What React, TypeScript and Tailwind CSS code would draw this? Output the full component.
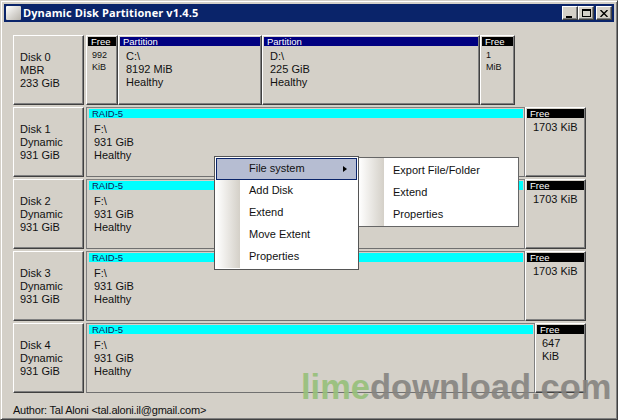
import React from "react";

const raised = "bg-[#d4d0c8] border border-t-white border-l-white border-r-[#404040] border-b-[#404040] shadow-[inset_-1px_-1px_0_#808080]";
const sunkenFlat = "bg-[#d4d0c8] border border-t-[#808080] border-l-[#808080] border-r-[#808080] border-b-[#707070]";

function DiskButton({ lines }: { lines: string[] }) {
  return (
    <div className={`${raised} w-[71px] h-[70px] shrink-0 mr-[2px] flex flex-col justify-center pl-[6px] text-[11px] leading-[13px] text-[#111]`}>
      {lines.map((l) => <div key={l}>{l}</div>)}
    </div>
  );
}

function Cell({ width, color, head, lines, small, pad = 6, top = 4 }: { width?: number; color: string; head: string; lines: string[]; small?: boolean; pad?: number; top?: number }) {
  return (
    <div className={`${raised} h-[70px] shrink-0 p-[1px] flex flex-col`} style={{ width }}>
      <div className={`h-[9px] ${color} text-white text-[9.5px] leading-[9px] pl-[3px] whitespace-nowrap`}>{head}</div>
      <div className={`text-[#111] ${small ? "text-[9px] leading-[12px]" : "text-[11px] leading-[13px]"}`} style={{ paddingLeft: pad, paddingTop: top }}>
        {lines.map((l) => <div key={l}>{l}</div>)}
      </div>
    </div>
  );
}

function RaidRow({ disk, raidW, freeW, free }: { disk: string; raidW: number; freeW: number; free: string[] }) {
  return (
    <div className="flex h-[70px] mb-[2px]">
      <DiskButton lines={[disk, "Dynamic", "931 GiB"]} />
      <div className="flex items-start">
        <div className={`${sunkenFlat} h-[70px] p-[1px] pl-[2px] shrink-0`} style={{ width: raidW }}>
          <div className="h-[9px] bg-[#00ffff] text-[#10205a] text-[9.5px] leading-[9px] pl-[3px] whitespace-nowrap">RAID-5</div>
          <div className="pl-[5px] pt-[5px] text-[11px] leading-[13px] text-[#111]">
            <div>F:\</div>
            <div>931 GiB</div>
            <div>Healthy</div>
          </div>
        </div>
        <Cell width={freeW} color="bg-black" head="Free" lines={free} pad={free.length > 1 ? 5 : 6} top={3} />
      </div>
    </div>
  );
}

function MenuItem({ label, active, arrow }: { label: string; active?: boolean; arrow?: boolean }) {
  return (
    <div className={`relative h-[22px] pb-[2px] flex items-center text-[11px] text-[#111] ${active ? "bg-[#b6bdd2] outline outline-1 -outline-offset-1 outline-[#0a246a]" : "bg-transparent"}`}>
      <span className="pl-[33px]">{label}</span>
      {arrow && <span className="absolute right-[10px] top-[8px] w-0 h-0 border-y-[3.5px] border-y-transparent border-l-[4px] border-l-black" />}
    </div>
  );
}

export default function App() {
  return (
    <div className="relative w-[618px] h-[420px] overflow-hidden bg-[#d4d0c8] border border-t-[#d4d0c8] border-l-[#d4d0c8] border-r-[#404040] border-b-[#404040] shadow-[inset_1px_1px_0_#fff,inset_-1px_-1px_0_#808080] p-[3px] flex flex-col" style={{ fontFamily: '"Liberation Sans", sans-serif' }}>
      <div className="h-[18px] shrink-0 bg-[#0a246a] flex items-center pl-[2px] pr-[2px]">
        <div className="w-[15px] h-[14px] bg-gradient-to-br from-white to-[#b8b4ac] rounded-[1px] mr-[2px]" />
        <span className="text-white text-[11px] font-bold tracking-[0.1px]" style={{ fontFamily: '"Open Sans", sans-serif' }}>Dynamic Disk Partitioner v1.4.5</span>
        <div className="ml-auto flex">
          {["min", "max"].map((k) => (
            <div key={k} className={`${raised} w-[16px] h-[14px] flex items-center justify-center`}>
              {k === "min" ? <div className="w-[6px] h-[2px] bg-black mt-[7px] mr-[2px]" /> : <div className="w-[9px] h-[8px] border border-black border-t-2" />}
            </div>
          ))}
          <div className={`${raised} w-[16px] h-[14px] ml-[2px] flex items-center justify-center`}>
            <svg width="8" height="7" viewBox="0 0 8 7"><path d="M0.5 0 L7.5 7 M7.5 0 L0.5 7" stroke="#000" strokeWidth="1.4" /></svg>
          </div>
        </div>
      </div>

      <div className="pl-[9px] pt-[13px] flex flex-col">
        <div className="flex h-[70px] mb-[2px]">
          <DiskButton lines={["Disk 0", "MBR", "233 GiB"]} />
          <Cell width={32} color="bg-black" head="Free" lines={["992", "KiB"]} small pad={4} top={3} />
          <Cell width={144} color="bg-[#000080]" head="Partition" lines={["C:\\", "8192 MiB", "Healthy"]} />
          <Cell width={218} color="bg-[#000080]" head="Partition" lines={["D:\\", "225 GiB", "Healthy"]} />
          <Cell width={35} color="bg-black" head="Free" lines={["1", "MiB"]} small pad={4} top={3} />
        </div>
        <RaidRow disk="Disk 1" raidW={439} freeW={61} free={["1703 KiB"]} />
        <RaidRow disk="Disk 2" raidW={439} freeW={61} free={["1703 KiB"]} />
        <RaidRow disk="Disk 3" raidW={439} freeW={61} free={["1703 KiB"]} />
        <RaidRow disk="Disk 4" raidW={449} freeW={51} free={["647", "KiB"]} />
      </div>

      <div className="pl-[9px] pt-[8px] text-[11px] leading-[14px] tracking-[-0.22px] text-[#111]">Author: Tal Aloni &lt;tal.aloni.il@gmail.com&gt;</div>

      <div className="absolute left-[357px] top-[156px] w-[161px] bg-white border border-[#666] py-[1px]">
        <div className="absolute left-0 top-0 bottom-0 w-[25px] bg-gradient-to-r from-white to-[#d4d0c8]" />
        <div className="relative">
          {["Export File/Folder", "Extend", "Properties"].map((l) => (
            <div key={l} className="h-[22px] flex items-center pl-[34px] text-[11px] text-[#111]">{l}</div>
          ))}
        </div>
      </div>

      <div className="absolute left-[213px] top-[155px] w-[145px] bg-white border border-[#555] p-[1px]">
        <div className="absolute left-[1px] top-[1px] bottom-[1px] w-[24px] bg-gradient-to-r from-white to-[#d4d0c8]" />
        <div className="relative">
          <MenuItem label="File system" active arrow />
          <MenuItem label="Add Disk" />
          <MenuItem label="Extend" />
          <MenuItem label="Move Extent" />
          <MenuItem label="Properties" />
        </div>
      </div>

      <div className="absolute left-[300px] top-[366px] text-[34.5px] leading-[40px] font-bold opacity-90 whitespace-nowrap">
        <span className="text-[#96c07a]">lime</span><span className="text-[#868480]">download.com</span>
      </div>
    </div>
  );
}
